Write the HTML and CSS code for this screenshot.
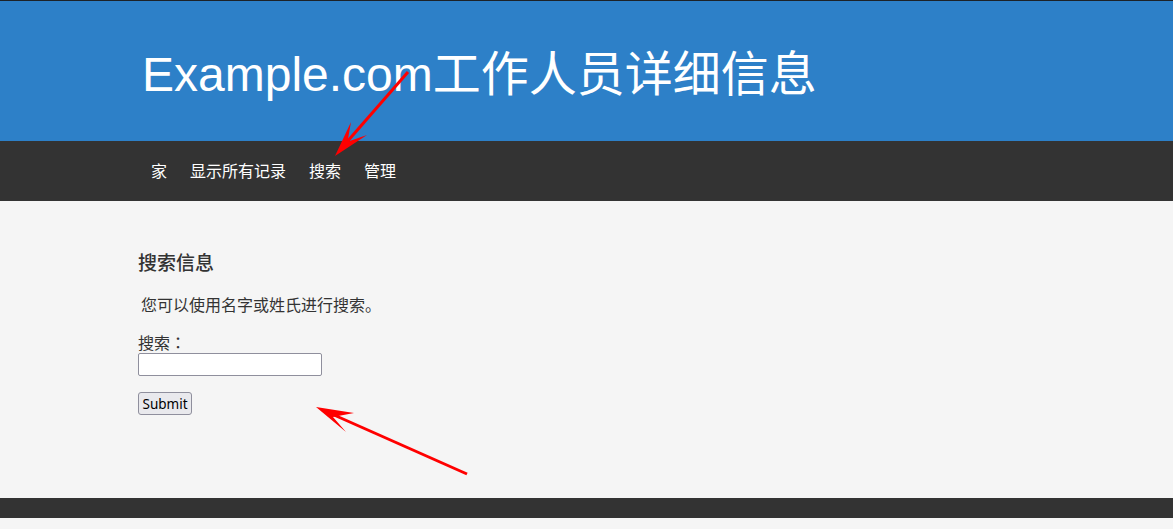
FILE: index.html
```html
<!DOCTYPE html>
<html lang="en">

<head>
    <meta charset="UTF-8">
    <meta name="viewport" content="width=device-width, initial-scale=1.0">
    <title>Example.com工作人员详细信息</title>
    <link rel="stylesheet" href="styles.css">
</head>

<body>
    <div class="header">
        <div class="container">
            <h1>Example.com工作人员详细信息</h1>
        </div>
    </div>

    <div class="nav">
        <div class="container">
            <ul class="menu">
                <li><a href="#">家</a></li>
                <li><a href="#">显示所有记录</a></li>
                <li><a href="#">搜索</a></li>
                <li><a href="#">管理</a></li>
            </ul>
        </div>
    </div>

    <div class="main">
        <div class="container">
            <h2>搜索信息</h2>
            <p class="intro">您可以使用名字或姓氏进行搜索。</p>
            <form class="search-form">
                <label for="term">搜索：</label>
                <input type="text" id="term" name="term">
                <button type="submit">Submit</button>
            </form>
        </div>
    </div>

    <div class="footer"></div>

    <!-- annotation arrows drawn over the page -->
    <svg class="marks" width="1173" height="529" viewBox="0 0 1173 529">
        <line x1="408" y1="72" x2="346" y2="143" />
        <polygon points="335,156 351,122 347.5,141.7 367,135" />
        <line x1="467" y1="474" x2="334" y2="415" />
        <polygon points="316,407 354,413 333,417 346,432" />
    </svg>
</body>

</html>
```

FILE: styles.css
```css
body {
    margin: 0;
    position: relative;
    background-color: #f5f5f5;
    color: #333;
    font-family: "Noto Sans", "Noto Sans CJK SC", sans-serif;
}

.container {
    width: 1035px;
    margin-left: 138px;
}

/* Header */
.header {
    background-color: #2d80c8;
    border-top: 1px solid #1d2227;
    height: 140px;
}

.header h1 {
    margin: 0;
    padding-left: 4px;
    font-family: "Liberation Sans", "Noto Sans CJK SC", sans-serif;
    font-size: 48px;
    font-weight: normal;
    line-height: 148px;
    color: #fff;
}

/* Navigation */
.nav {
    background-color: #333;
    height: 60px;
}

.menu {
    list-style: none;
    margin: 0;
    padding: 0 0 0 1.5px;
    display: flex;
}

.menu a {
    display: block;
    padding: 0 11.5px;
    font-size: 16px;
    line-height: 60px;
    color: #fff;
    text-decoration: none;
}

/* Main content */
.main {
    padding: 49px 0 83px;
}

.main h2 {
    margin: 0;
    font-size: 19px;
    font-weight: 500;
    line-height: 26px;
}

.intro {
    margin: 18px 0 17px;
    padding-left: 3px;
    font-size: 16px;
    line-height: 22px;
}

.search-form label {
    display: block;
    font-family: "Noto Sans", "Noto Sans CJK JP", sans-serif;
    font-size: 16px;
    line-height: 20px;
}

.search-form input {
    display: block;
    box-sizing: border-box;
    width: 184px;
    height: 23px;
    margin: 0;
    border: 1px solid #8f8f9d;
    border-radius: 2px;
    background-color: #fff;
}

.search-form button {
    display: block;
    box-sizing: border-box;
    width: 54px;
    height: 23px;
    margin-top: 16px;
    padding: 0;
    border: 1px solid #8f8f9d;
    border-radius: 3px;
    background-color: #e9e9ed;
    color: #000;
    font-family: "Noto Sans", sans-serif;
    font-size: 13.5px;
}

/* Footer */
.footer {
    background-color: #333;
    height: 20px;
}

/* Annotation overlay */
.marks {
    position: absolute;
    top: 0;
    left: 0;
    pointer-events: none;
}

.marks line {
    stroke: #f00;
    stroke-width: 3;
}

.marks polygon {
    fill: #f00;
}
```
